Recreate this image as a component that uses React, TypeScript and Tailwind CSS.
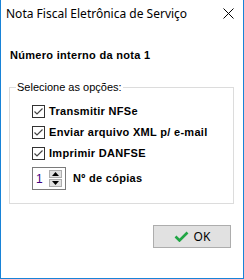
import { useState } from 'react';

// caixa de seleção estilo Windows 10
function CheckBox({ checked }: { checked: boolean }) {
  return (
    <svg width="13" height="13" viewBox="0 0 13 13" className="shrink-0">
      <rect x="0.5" y="0.5" width="12" height="12" fill="#fff" stroke="#333" />
      {checked && <path d="M2.5 6.5 L5 9 L10.5 3.5" fill="none" stroke="#444" strokeWidth="1.2" />}
    </svg>
  );
}

function CheckRow({ label, checked, onToggle }: { label: string; checked: boolean; onToggle: () => void }) {
  return (
    <label onClick={onToggle} className="flex items-center gap-[4px] h-[21px] cursor-default">
      <CheckBox checked={checked} />
      <span className="font-bold text-[11px] tracking-[0.3px] text-black">{label}</span>
    </label>
  );
}

export default function App() {
  const [opts, setOpts] = useState({ nfse: true, xml: true, danfse: true });
  const [copias, setCopias] = useState(1);

  return (
    <div
      className="w-[244px] h-[279px] bg-white border-x border-b border-[#1883d7] flex flex-col text-black"
      style={{ fontFamily: '"Liberation Sans", Arial, sans-serif' }}
    >
      {/* barra de título */}
      <header className="h-[30px] flex items-center justify-between pl-[5px] pr-[9px]">
        <span className="text-[12px] pb-[2px]" style={{ fontFamily: '"Noto Sans", sans-serif' }}>
          Nota Fiscal Eletrônica de Serviço
        </span>
        <svg width="11" height="11" viewBox="0 0 11 11" className="mb-[3px]">
          <path d="M0.5 0.5 L10.5 10.5 M10.5 0.5 L0.5 10.5" stroke="#000" strokeWidth="1" />
        </svg>
      </header>

      <main className="flex-1 flex flex-col">
        <h1 className="font-bold text-[11px] tracking-[0.3px] pl-[9px] mt-[18px] leading-[14px]">Número interno da nota 1</h1>

        <fieldset className="ml-[8px] w-[225px] mt-[18px] border border-[#dcdcdc] pt-[7px] pb-[13px]">
          <legend className="ml-[6px] px-[1px] text-[11px] leading-[14px]">Selecione as opções:</legend>
          <div className="pl-[22px] flex flex-col">
            <CheckRow label="Transmitir NFSe" checked={opts.nfse} onToggle={() => setOpts({ ...opts, nfse: !opts.nfse })} />
            <CheckRow label="Enviar arquivo XML p/ e-mail" checked={opts.xml} onToggle={() => setOpts({ ...opts, xml: !opts.xml })} />
            <CheckRow label="Imprimir DANFSE" checked={opts.danfse} onToggle={() => setOpts({ ...opts, danfse: !opts.danfse })} />

            <div className="flex items-center gap-[7px] mt-[3px]">
              <div className="w-[34px] h-[23px] border border-[#7a7a7a] flex items-center justify-between pl-[3px] pr-[3px]">
                <span className="text-[12px] text-[#400080]">{copias}</span>
                <div className="flex flex-col gap-[1px]">
                  <button
                    onClick={() => setCopias(copias + 1)}
                    className="w-[13px] h-[8px] bg-[#e1e1e1] border border-[#adadad] flex items-center justify-center"
                  >
                    <svg width="7" height="4" viewBox="0 0 7 4"><path d="M3.5 0 L7 4 L0 4 Z" fill="#000" /></svg>
                  </button>
                  <button
                    onClick={() => setCopias(Math.max(1, copias - 1))}
                    className="w-[13px] h-[8px] bg-[#e1e1e1] border border-[#adadad] flex items-center justify-center"
                  >
                    <svg width="7" height="4" viewBox="0 0 7 4"><path d="M0 0 L7 0 L3.5 4 Z" fill="#000" /></svg>
                  </button>
                </div>
              </div>
              <span className="font-bold text-[11px] tracking-[0.3px]">Nº de cópias</span>
            </div>
          </div>
        </fieldset>

        <div className="flex justify-end pr-[12px] mt-[21px]">
          <button className="w-[78px] h-[23px] bg-[#e1e1e1] border border-[#adadad] flex items-center justify-center gap-[5px]">
            <svg width="15" height="11" viewBox="0 0 15 11">
              <path d="M1.5 5.5 L5.5 9.5 L13.5 1.5" fill="none" stroke="#21a645" strokeWidth="2.6" />
            </svg>
            <span className="text-[12px]" style={{ fontFamily: '"Noto Sans", sans-serif' }}>OK</span>
          </button>
        </div>
      </main>
    </div>
  );
}
